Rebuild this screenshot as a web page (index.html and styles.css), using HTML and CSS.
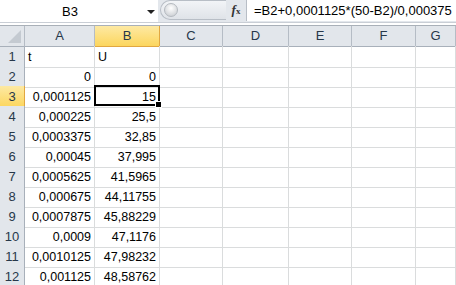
FILE: index.html
```html
<!DOCTYPE html>
<html lang="de">
<head>
    <meta charset="UTF-8">
    <title>Tabelle</title>
    <link rel="stylesheet" href="styles.css">
</head>
<body>

<!-- Bearbeitungsleiste -->
<div class="formula-bar">
    <div class="name-box">
        <span class="name-text">B3</span>
        <span class="name-arrow"></span>
    </div>
    <div class="splitter">
        <span class="knob"></span>
    </div>
    <div class="fx-button"><i>f</i><sub>x</sub></div>
    <div class="formula-input">=B2+0,0001125*(50-B2)/0,000375</div>
</div>
<div class="bar-gap"></div>

<!-- Tabelle -->
<div class="sheet">
    <div class="grid">
        <div class="corner"><span class="corner-tri"></span></div>
        <div class="col-head">A</div>
        <div class="col-head active">B</div>
        <div class="col-head">C</div>
        <div class="col-head">D</div>
        <div class="col-head">E</div>
        <div class="col-head">F</div>
        <div class="col-head">G</div>
    </div>
    <div id="rows"></div>
    <div class="selection"><span class="handle"></span></div>
</div>

<script>
    // Werte der Spalten A und B
    const data = [
        ["t", "U"],
        ["0", "0"],
        ["0,0001125", "15"],
        ["0,000225", "25,5"],
        ["0,0003375", "32,85"],
        ["0,00045", "37,995"],
        ["0,0005625", "41,5965"],
        ["0,000675", "44,11755"],
        ["0,0007875", "45,88229"],
        ["0,0009", "47,1176"],
        ["0,0010125", "47,98232"],
        ["0,001125", "48,58762"]
    ];

    const rows = document.getElementById("rows");
    data.forEach((row, i) => {
        const text = i === 0 ? "text" : "num";
        rows.innerHTML += `
            <div class="grid">
                <div class="row-head${i === 2 ? ' active' : ''}">${i + 1}</div>
                <div class="cell ${text}">${row[0]}</div>
                <div class="cell ${text}">${row[1]}</div>
                <div class="cell"></div>
                <div class="cell"></div>
                <div class="cell"></div>
                <div class="cell"></div>
                <div class="cell"></div>
            </div>
        `;
    });
</script>
</body>
</html>
```

FILE: styles.css
```css
body {
    margin: 0;
    font-family: 'Liberation Sans', Arial, sans-serif;
    font-size: 13px;
    background: #fff;
    overflow: hidden;
}

/* Bearbeitungsleiste */
.formula-bar {
    display: flex;
    height: 22px;
    background: #e3e7ec;
}

.name-box {
    width: 158px;
    background: #fff;
    display: flex;
    align-items: center;
    position: relative;
}

.name-text {
    width: 140px;
    text-align: center;
    color: #000;
}

.name-arrow {
    width: 0;
    height: 0;
    border-left: 4px solid transparent;
    border-right: 4px solid transparent;
    border-top: 4px solid #222;
    margin-left: 7px;
    margin-top: 2px;
}

.splitter {
    width: 66px;
    margin-left: 2px;
    height: 20px;
    background: linear-gradient(#f2f4f7, #dfe3e8);
    border: 1px solid #b8bec6;
    border-right: none;
    border-radius: 11px 0 0 11px;
    box-sizing: border-box;
    display: flex;
    align-items: center;
    padding-left: 3px;
}

.knob {
    width: 12px;
    height: 12px;
    border-radius: 50%;
    background: radial-gradient(circle at 50% 35%, #ffffff, #c3c7cc);
    border: 1px solid #b4b9bf;
}

.fx-button {
    width: 20px;
    height: 20px;
    box-sizing: border-box;
    background: #e3e7ec;
    font-family: 'Liberation Serif', serif;
    font-size: 13px;
    font-weight: bold;
    color: #333;
    line-height: 19px;
    text-align: center;
}

.fx-button sub {
    font-size: 9px;
    vertical-align: 0;
}

.formula-input {
    flex: 1;
    height: 21px;
    background: #fff;
    border-left: 1px solid #b8bec6;
    padding-left: 7px;
    line-height: 21px;
    white-space: nowrap;
    color: #000;
}

.bar-gap {
    height: 2px;
    background: #fff;
    border-top: 1px solid #c9ced5;
    border-bottom: 1px solid #a9b0b8;
}

/* Tabelle */
.sheet {
    position: relative;
}

.grid {
    display: grid;
    grid-template-columns: 25px 70px 65px 63px 66px 63px 64px 1fr;
    height: 20px;
}

.corner,
.col-head {
    background: #e2e6eb;
    border-right: 1px solid #b5bcc5;
    border-bottom: 1px solid #a8b0ba;
    box-sizing: border-box;
    text-align: center;
    line-height: 20px;
    color: #27384a;
}

.corner {
    position: relative;
}

.corner-tri {
    position: absolute;
    right: 3px;
    bottom: 3px;
    width: 0;
    height: 0;
    border-left: 13px solid transparent;
    border-bottom: 13px solid #c4cad1;
}

.col-head.active {
    background: linear-gradient(#fde9a3, #fcd65e);
    border-right-color: #e1a741;
    border-bottom-color: #e1a741;
}

.row-head {
    background: #e2e6eb;
    border-right: 1px solid #a8b0ba;
    border-bottom: 1px solid #c5ccd4;
    box-sizing: border-box;
    text-align: center;
    line-height: 21px;
    color: #27384a;
}

.row-head.active {
    background: linear-gradient(#fde9a3, #fcd65e);
    border-right-color: #e1a741;
    border-bottom-color: #e1a741;
}

.cell {
    border-right: 1px solid #dadcdd;
    border-bottom: 1px solid #dadcdd;
    box-sizing: border-box;
    font-size: 12.5px;
    line-height: 22px;
    padding: 0 3px;
    white-space: nowrap;
    overflow: hidden;
    color: #000;
}

.cell.num {
    text-align: right;
}

.cell.text {
    text-align: left;
}

/* markierte Zelle B3 */
.selection {
    position: absolute;
    left: 94px;
    top: 59px;
    width: 66px;
    height: 21px;
    border: 2px solid #000;
    box-sizing: border-box;
}

.handle {
    position: absolute;
    right: -4px;
    bottom: -4px;
    width: 5px;
    height: 5px;
    background: #000;
    border: 1px solid #fff;
}
```
